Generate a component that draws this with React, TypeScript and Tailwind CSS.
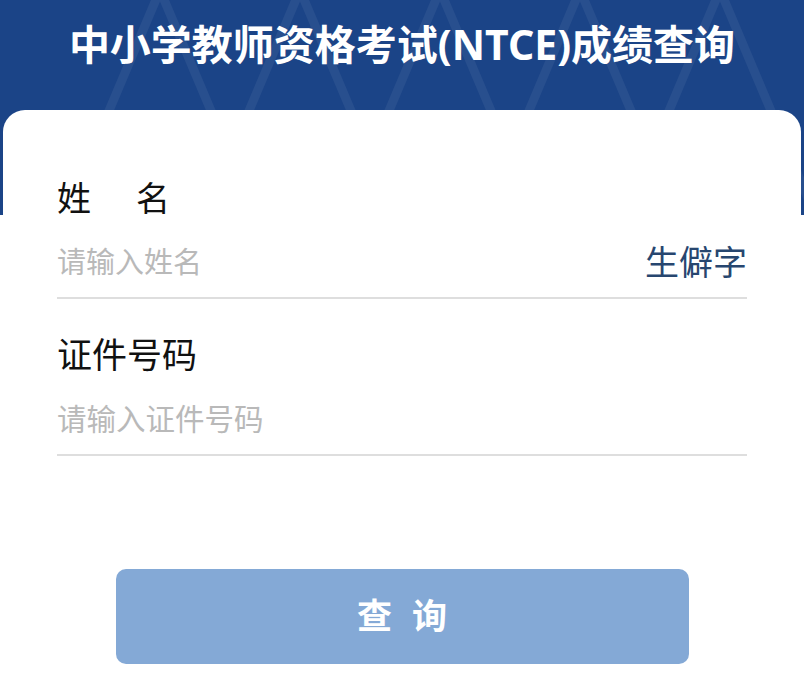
import React from 'react';

const peaks = [160, 300, 440, 580, 720];

function HeaderPattern() {
  return (
    <svg className="absolute inset-0 h-full w-full" viewBox="0 0 804 215" preserveAspectRatio="none">
      {peaks.map((x) => (
        <path
          key={x}
          d={`M${x - 95} 215 L${x} -10 L${x + 95} 215`}
          fill="none"
          stroke="#ffffff"
          strokeOpacity="0.06"
          strokeWidth="9"
        />
      ))}
    </svg>
  );
}

export default function App() {
  return (
    <div
      className="relative h-[676px] w-full overflow-hidden bg-white"
      style={{ fontFamily: '"Noto Sans", "Noto Sans CJK SC", sans-serif' }}
    >
      {/* blue header band behind the card */}
      <div className="absolute inset-x-0 top-0 h-[215px] bg-[#1b4487]">
        <HeaderPattern />
      </div>

      <div className="relative">
        <h1 className="flex h-[110px] items-center justify-center pb-[20px] text-[41px] font-bold text-white">
          中小学教师资格考试(NTCE)成绩查询
        </h1>

        <div className="mx-[3px] rounded-t-[22px] bg-white px-[54px] pt-[68px]">
          {/* name */}
          <div className="flex text-[34px] leading-[41px] text-[#111]">
            <span>姓</span>
            <span className="ml-[45px]">名</span>
          </div>
          <div className="mt-2 flex h-[72px] items-center justify-between border-b-2 border-[#dedede]">
            <span className="text-[29px] text-[#b9b9b9]">请输入姓名</span>
            <span className="text-[34px] text-[#27466f]">生僻字</span>
          </div>

          {/* id number */}
          <div className="mt-[35px] text-[35px] leading-[42px] text-[#111]">证件号码</div>
          <div className="mt-2 flex h-[72px] items-center border-b-2 border-[#dedede]">
            <span className="text-[29.5px] text-[#b9b9b9]">请输入证件号码</span>
          </div>

          <button className="mx-auto mt-[113px] flex h-[95px] w-[573px] items-center justify-center rounded-[10px] bg-[#84a9d6] text-[35px] font-bold text-white">
            <span>查</span>
            <span className="ml-[20px]">询</span>
          </button>
        </div>
      </div>
    </div>
  );
}
